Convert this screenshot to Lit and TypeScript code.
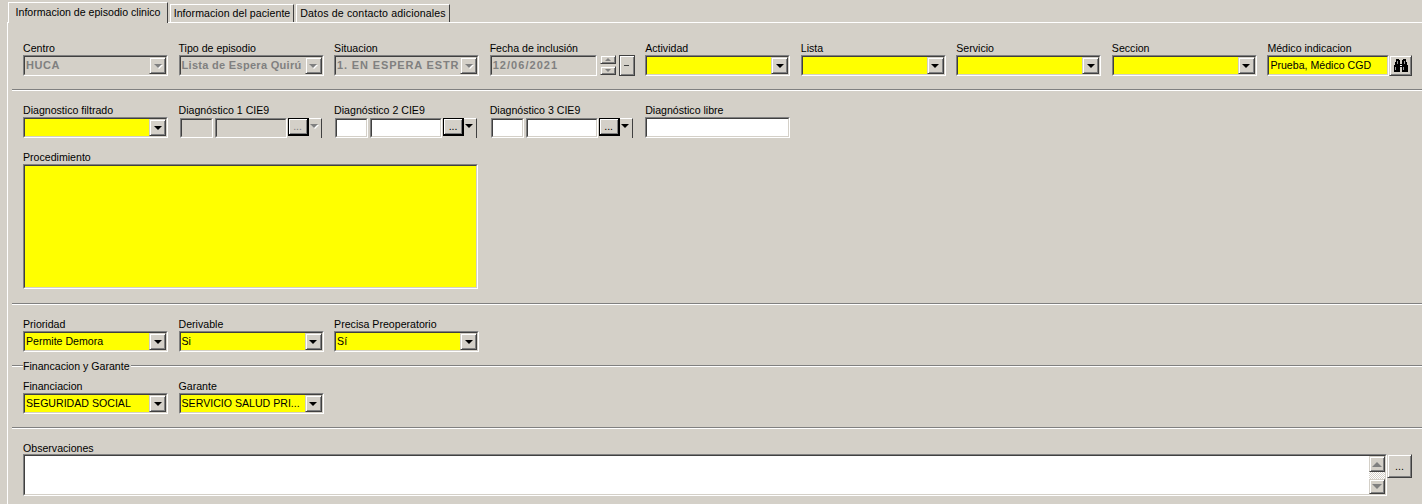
import { LitElement, html, css } from "lit";
import { customElement } from "lit/decorators.js";

const binoculars = html`<svg class="bino" width="16" height="14" viewBox="0 0 16 14" shape-rendering="crispEdges">
  <path fill="#000" d="M3 0h3v1h1v4h2V1h1V0h3v3h1v3h1v7h-6V8H7v5H1V6h1V3h1z"/>
  <path fill="#9a9a9a" d="M4 2h1v3H4zM11 2h1v3h-1zM2 8h1v3H2zM10 8h1v3h-1z"/>
  <path fill="#fff" d="M7 6h2v1H7z"/>
</svg>`;

@customElement("app-root")
export class AppRoot extends LitElement {
  static styles = css`
    :host { display: block; width: 1422px; height: 504px; overflow: hidden; background: #d4d0c8; font: 10.6px/13px "Liberation Sans", Arial, sans-serif; color: #000; }
    .tabs { display: flex; align-items: flex-end; height: 22px; padding-left: 8px; box-sizing: border-box; gap: 2px; }
    .tab { height: 18px; line-height: 16px; box-sizing: border-box; padding: 0 1px; border: 1px solid #d4d0c8; border-top-color: #fff; border-left-color: #fff; border-right-color: #404040; border-bottom: 0; white-space: nowrap; text-align: center; }
    .tab.active { height: 21px; width: 160px; line-height: 19px; margin-bottom: -1px; position: relative; z-index: 1; background: #d4d0c8; border-top: 1px solid #fff; }
    .tab.t2 { width: 124px; letter-spacing: .05px; }
    .tab.t3 { width: 154px; letter-spacing: .14px; }
    .pane { margin-left: 7px; height: 482px; box-sizing: border-box; border-top: 1px solid #fff; border-left: 1px solid #fff; }
    .row { display: grid; grid-template-columns: repeat(9, 155.55px); padding-left: 15px; }
    .field { width: 145px; }
    .lab { height: 13px; white-space: nowrap; }
    .sunken { box-sizing: border-box; border: 1px solid; border-color: #808080 #fff #fff #808080; }
    .in { box-sizing: border-box; height: 100%; border: 1px solid; border-color: #404040 #d4d0c8 #d4d0c8 #404040; display: flex; overflow: hidden; }
    .yellow .in { background: #ff0; }
    .white .in { background: #fff; }
    .gray .in { background: #d4d0c8; }
    .combo { height: 21px; }
    .txt { flex: 1; min-width: 0; padding-left: 1px; line-height: 16px; white-space: nowrap; overflow: hidden; }
    .dis .txt { color: #808080; font-weight: 700; font-size: 11px; letter-spacing: .55px; }
    .dis.tight .txt { letter-spacing: .3px; }
    .dis.wide .txt { letter-spacing: .85px; }
    .dis .date .txt { letter-spacing: 1.05px; }
    .raised { box-sizing: border-box; border: 1px solid; border-color: #d4d0c8 #404040 #404040 #d4d0c8; box-shadow: inset 1px 1px #fff, inset -1px -1px #808080; background: #d4d0c8; display: flex; align-items: center; justify-content: center; }
    .dd { width: 17px; flex: none; }
    .arrow { width: 0; height: 0; border: solid transparent; border-width: 4px 4px 0; border-top-color: #000; }
    .dis .arrow { border-top-color: #808080; filter: drop-shadow(1px 1px 0 #fff); }
    .divider { height: 1px; margin-left: 4px; background: #808080; border-bottom: 1px solid #fff; }
    .r1 { margin-top: 19px; }
    .d1 { margin-top: 13px; }
    .r2 { margin-top: 13px; }
    .r2b { margin-top: 13px; padding-left: 15px; }
    .proc { width: 455px; height: 125px; }
    .d2 { margin-top: 14px; }
    .r3 { margin-top: 13px; }
    .legend { display: flex; align-items: center; margin: 7px 0 0 4px; height: 14px; }
    .legend i { display: block; height: 1px; background: #808080; border-bottom: 1px solid #fff; }
    .legend i.a { width: 11px; }
    .legend i.b { flex: 1; }
    .legend span { white-space: nowrap; padding-right: 1px; }
    .r4 { margin-top: 7px; }
    .d3 { margin-top: 13px; }
    .r5 { margin-top: 12px; padding-left: 15px; }
    .r5 .lab { padding-top: 1px; height: 12px; }
    .obsrow { display: flex; width: 1390px; }
    .obs { width: 1364px; height: 42px; flex: none; }
    .obs .in { justify-content: flex-end; }
    .sb { width: 16px; flex: none; display: flex; flex-direction: column; background: repeating-conic-gradient(#d4d0c8 0 25%, #fff 0 50%) 0 0 / 2px 2px; }
    .sb .raised { height: 16px; }
    .sb .gap { flex: 1; }
    .sb .dn { height: 15px; }
    .up { width: 0; height: 0; border: solid transparent; border-width: 0 5px 5px; border-bottom-color: #808080; }
    .down { width: 0; height: 0; border: solid transparent; border-width: 5px 5px 0; border-top-color: #808080; }
    .more { width: 25px; height: 24px; flex: none; line-height: 16px; }
    .dateline { display: flex; width: 145px; }
    .date { width: 107px; flex: none; }
    .spin { width: 16px; margin-left: 3px; flex: none; display: flex; flex-direction: column; gap: 2px; height: 21px; }
    .spin .raised { height: 9px; }
    .spin .up { border-width: 0 3px 3px; }
    .spin .down { border-width: 3px 3px 0; }
    .dash { width: 16px; height: 21px; margin-left: 3px; flex: none; border-color: #404040; }
    .dash b { display: block; width: 5px; height: 1px; background: #404040; }
    .medico { display: flex; width: 145px; }
    .medico .combo { width: 122px; flex: none; }
    .bbtn { width: 23px; height: 21px; flex: none; }
    .bbtn .bino { display: block; }
    .diag { display: flex; height: 20px; margin: 1px 0 0 1px; }
    .diag .s { width: 33px; height: 20px; flex: none; }
    .diag .l { width: 72px; height: 20px; flex: none; margin-left: 2px; }
    .ell { width: 21px; height: 18px; flex: none; margin-left: 1px; border-color: #000; border-width: 1px 2px 2px 1px; line-height: 13px; align-items: flex-end; padding-bottom: 1px; }
    .dis .ell { color: #808080; }
    .tail { width: 13px; flex: none; height: 20px; box-sizing: border-box; border-top: 1px solid #fff; border-right: 1px solid #404040; display: flex; justify-content: center; padding-top: 5px; padding-right: 2px; }
    .libre { height: 21px; }
  `;

  combo(label: string, value = "", state = "yellow", extra = "") {
    return html`<div class="field ${state === "gray" ? "dis" : ""} ${extra}">
      <div class="lab">${label}</div>
      <div class="sunken combo ${state}"><div class="in"><span class="txt">${value}</span><span class="raised dd"><span class="arrow"></span></span></div></div>
    </div>`;
  }

  diag(label: string, disabled: boolean) {
    const c = disabled ? "gray" : "white";
    return html`<div class="field ${disabled ? "dis" : ""}">
      <div class="lab">${label}</div>
      <div class="diag">
        <div class="sunken s ${c}"><div class="in"></div></div>
        <div class="sunken l ${c}"><div class="in"></div></div>
        <span class="raised ell">...</span>
        <span class="tail"><span class="arrow"></span></span>
      </div>
    </div>`;
  }

  render() {
    return html`
      <div class="tabs">
        <div class="tab active">Informacion de episodio clinico</div>
        <div class="tab t2">Informacion del paciente</div>
        <div class="tab t3">Datos de contacto adicionales</div>
      </div>
      <div class="pane">
        <div class="row r1">
          ${this.combo("Centro", "HUCA", "gray")}
          ${this.combo("Tipo de episodio", "Lista de Espera Quirú", "gray", "tight")}
          ${this.combo("Situacion", "1. EN ESPERA ESTR", "gray", "wide")}
          <div class="field dis">
            <div class="lab">Fecha de inclusión</div>
            <div class="dateline">
              <div class="sunken combo gray date"><div class="in"><span class="txt">12/06/2021</span></div></div>
              <div class="spin"><span class="raised"><span class="up"></span></span><span class="raised"><span class="down"></span></span></div>
              <span class="raised dash"><b></b></span>
            </div>
          </div>
          ${this.combo("Actividad")}
          ${this.combo("Lista")}
          ${this.combo("Servicio")}
          ${this.combo("Seccion")}
          <div class="field">
            <div class="lab">Médico indicacion</div>
            <div class="medico">
              <div class="sunken combo yellow"><div class="in"><span class="txt">Prueba, Médico CGD</span></div></div>
              <span class="raised bbtn">${binoculars}</span>
            </div>
          </div>
        </div>
        <div class="divider d1"></div>
        <div class="row r2">
          ${this.combo("Diagnostico filtrado")}
          ${this.diag("Diagnóstico 1 CIE9", true)}
          ${this.diag("Diagnóstico 2 CIE9", false)}
          ${this.diag("Diagnóstico 3 CIE9", false)}
          <div class="field">
            <div class="lab">Diagnóstico libre</div>
            <div class="sunken white libre"><div class="in"></div></div>
          </div>
        </div>
        <div class="r2b">
          <div class="lab">Procedimiento</div>
          <div class="sunken yellow proc"><div class="in"></div></div>
        </div>
        <div class="divider d2"></div>
        <div class="row r3">
          ${this.combo("Prioridad", "Permite Demora")}
          ${this.combo("Derivable", "Si")}
          ${this.combo("Precisa Preoperatorio", "Sí")}
        </div>
        <div class="legend"><i class="a"></i><span>Financacion y Garante</span><i class="b"></i></div>
        <div class="row r4">
          ${this.combo("Financiacion", "SEGURIDAD SOCIAL")}
          ${this.combo("Garante", "SERVICIO SALUD PRI...")}
        </div>
        <div class="divider d3"></div>
        <div class="r5">
          <div class="lab">Observaciones</div>
          <div class="obsrow">
            <div class="sunken white obs"><div class="in">
              <div class="sb">
                <span class="raised"><span class="up"></span></span>
                <span class="gap"></span>
                <span class="raised dn"><span class="down"></span></span>
              </div>
            </div></div>
            <span class="raised more">...</span>
          </div>
        </div>
      </div>
    `;
  }
}
